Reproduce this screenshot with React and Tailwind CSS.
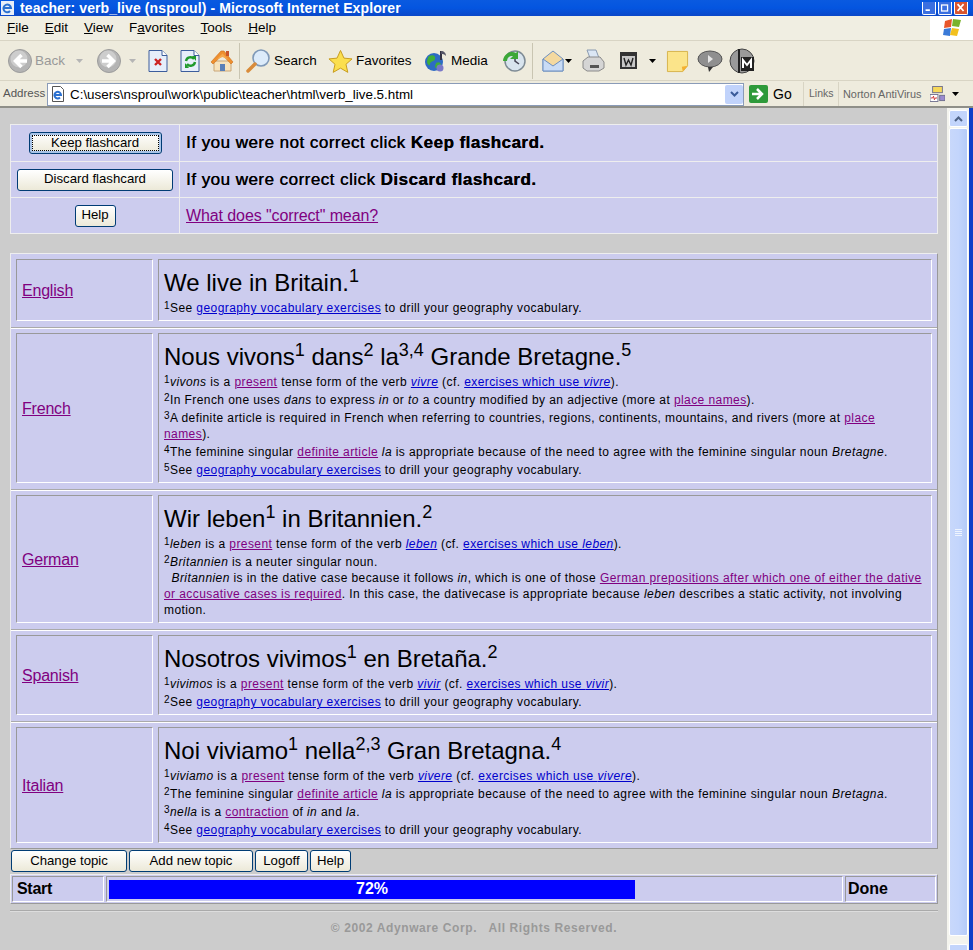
import React from "react";

const sans = "font-['Liberation_Sans',Arial,sans-serif]";

function Btn({ w, focused, children }) {
  return (
    <button
      type="button"
      className={`h-[22px] ${w} shrink-0 rounded-[3px] border border-[#003c74] bg-gradient-to-b from-white to-[#ece9d8] pb-[1px] text-[13.2px] leading-none text-black ${
        focused ? "shadow-[inset_0_0_0_2px_#a9c4e8] outline-1 -outline-offset-4 outline-dotted outline-black" : ""
      }`}
    >
      {children}
    </button>
  );
}

function A({ purple, children }) {
  return <a className={`underline ${purple ? "text-[#800080]" : "text-[#0000cc]"}`}>{children}</a>;
}

function N({ n, children }) {
  return (
    <p className="pt-[2px] leading-[16px]">
      <sup className="relative -top-[3px] align-baseline text-[10px] leading-none">{n}</sup>
      {children}
    </p>
  );
}

function Row({ lang, title, children, first }) {
  return (
    <div className={`-mx-[5px] flex gap-[5px] px-[5px] ${first ? "" : "mt-[6px] border-t border-[#aaa] pt-[5px] shadow-[inset_0_1px_0_#fff]"}`}>
      <div className="flex w-[137px] shrink-0 items-center border border-b-white border-l-[#999] border-r-white border-t-[#999] bg-[#ccccee] pl-[5px] pt-[1px] text-[16px] tracking-[-0.2px]">
        <A purple>{lang}</A>
      </div>
      <div className="min-w-0 flex-1 border border-b-white border-l-[#999] border-r-white border-t-[#999] bg-[#ccccee] pl-[5px] pr-[6px] pb-[4px] text-[12px] tracking-[0.42px]">
        <h2 className="h-[38px] pt-[5px] text-[24px] leading-[36px] tracking-[0px] whitespace-nowrap">{title}</h2>
        {children}
      </div>
    </div>
  );
}

const S = ({ children }) => (
  <sup className="relative -top-[9px] align-baseline text-[18px] leading-none">{children}</sup>
);

const Geo = ({ n }) => (
  <N n={n}>
    See <A>geography vocabulary exercises</A> to drill your geography vocabulary.
  </N>
);

function Present() {
  return <A purple>present</A>;
}

function TitleBar() {
  return (
    <div className="flex h-[16px] items-center bg-gradient-to-b from-[#0a5ae0] via-[#0455e0] to-[#0a47c8] text-white">
      <svg width="16" height="15" viewBox="0 0 16 15" className="shrink-0">
        <rect x="1" y="0" width="13" height="14" fill="#e8eef8" />
        <path d="M3.500 7h7.500a3.800 3.800 0 1 0-1 3" fill="none" stroke="#2a70d0" strokeWidth="2" />
      </svg>
      <span className="ml-[4px] text-[14px] font-bold leading-none tracking-[0.1px] whitespace-nowrap">
        teacher: verb_live (nsproul) - Microsoft Internet Explorer
      </span>
      <div className="ml-auto flex gap-[2px] pr-[5px]">
        <WinBtn>
          <rect x="3" y="8" width="5" height="2" fill="#fff" />
        </WinBtn>
        <WinBtn>
          <rect x="3" y="3" width="7" height="7" fill="none" stroke="#fff" strokeWidth="1.5" />
        </WinBtn>
        <WinBtn red>
          <path d="M3 2l7 8M10 2l-7 8" stroke="#fff" strokeWidth="2" />
        </WinBtn>
      </div>
    </div>
  );
}

function WinBtn({ red, children }) {
  return (
    <svg
      width="14"
      height="13"
      viewBox="0 0 14 13"
      className={`rounded-b-[2px] border-x border-b border-white ${red ? "bg-[#d8552f]" : "bg-[#3a6fe0]"}`}
    >
      {children}
    </svg>
  );
}

function MenuBar() {
  const items = [
    ["F", "ile"],
    ["E", "dit"],
    ["V", "iew"],
    ["F", "avorites", 1],
    ["T", "ools"],
    ["H", "elp"],
  ];
  return (
    <div className="flex h-[25px] items-center border-b border-[#d8d4c4] bg-[#f0eee2] pl-[7px] text-[13.5px] text-black">
      <div className="flex gap-[16px]">
        {items.map(([a, b, fav], i) => (
          <span key={i}>
            {fav ? (
              <>
                F<span className="underline">a</span>vorites
              </>
            ) : (
              <>
                <span className="underline">{a}</span>
                {b}
              </>
            )}
          </span>
        ))}
      </div>
      <div className="ml-auto flex h-full w-[43px] items-center justify-center bg-white">
        <svg width="22" height="20" viewBox="0 0 22 20">
          <path d="M4 3l7-2-1 8-7 1z" fill="#e8562a" />
          <path d="M12 1l8 1-2 7-7-1z" fill="#7ab32c" />
          <path d="M3 11l7-1-1 8-7-1z" fill="#3a7ad8" />
          <path d="M11 10l7 1-2 7-7-1z" fill="#f2c01e" />
        </svg>
      </div>
    </div>
  );
}

function Nav({ right }) {
  return (
    <svg width="24" height="24" viewBox="0 0 24 24" className="shrink-0">
      <circle cx="12" cy="12" r="11.500" fill="#b4b4b4" stroke="#9c9c9c" />
      <circle cx="11" cy="10" r="8.500" fill="#cdcdcd" />
      <path
        d={right ? "M5 12h11M10.500 6l6 6-6 6" : "M19 12H8M13.500 6l-6 6 6 6"}
        fill="none"
        stroke="#fff"
        strokeWidth="3.500"
      />
    </svg>
  );
}

const Caret = ({ c = "#b5b5b5" }) => (
  <svg width="7" height="4" viewBox="0 0 7 4" className="shrink-0">
    <path d="M0 0h7L3.500 4z" fill={c} />
  </svg>
);

const Sep = () => <div className="h-[36px] w-px shrink-0 bg-[#c9c5b2]" />;

function PageIcon({ children }) {
  return (
    <svg width="20" height="24" viewBox="0 0 20 24" className="shrink-0">
      <path d="M1 1.500h13l5 5v16H1z" fill="#e6eefa" stroke="#3c5d9c" />
      <path d="M14 1.500v5h5" fill="#fff" stroke="#3c5d9c" />
      {children}
    </svg>
  );
}

function ToolBar() {
  return (
    <div className="flex h-[40px] items-center border-b border-[#d8d4c4] bg-[#eeebdd] pl-[8px] pt-[1px] text-[13.500px] text-black">
      <Nav />
      <span className="ml-[3px] w-[30px] text-[#999]">Back</span>
      <span className="ml-[11px] flex"><Caret /></span>
      <span className="ml-[14px] flex"><Nav right /></span>
      <span className="ml-[8px] flex"><Caret /></span>
      <span className="ml-[12px] flex">
        <PageIcon>
          <path d="M7 10l6 6M13 10l-6 6" stroke="#cc2222" strokeWidth="2.400" />
        </PageIcon>
      </span>
      <span className="ml-[12px] flex">
        <PageIcon>
          <path d="M6 12a4.500 4.500 0 0 1 8-2" fill="none" stroke="#1f9a2c" strokeWidth="2.400" />
          <path d="M15 13a4.500 4.500 0 0 1-8 2" fill="none" stroke="#1f9a2c" strokeWidth="2.400" />
          <path d="M12 7h4v5zM9 19H5v-5z" fill="#1f9a2c" />
        </PageIcon>
      </span>
      <svg width="24" height="24" viewBox="0 0 24 24" className="ml-[10px] shrink-0">
        <path d="M4 12h17v10H4z" fill="#f7e3bd" stroke="#c9a678" />
        <path d="M1 13L11 2h3l9 11-2 2-8.500-9L3 15z" fill="#ef8f2e" stroke="#c96f1c" strokeWidth="0.600" />
        <path d="M6 11l6.500-6.500L19 11l-6.500-3z" fill="#f5a94e" />
        <rect x="16" y="2" width="3" height="5" fill="#c9552a" />
        <rect x="10" y="15" width="5" height="7" fill="#5a80b8" />
      </svg>
      <div className="ml-[5px] mr-[5px]"><Sep /></div>
      <svg width="26" height="26" viewBox="0 0 26 26" className="shrink-0">
        <circle cx="16" cy="10" r="8" fill="#dcebfa" stroke="#7f99b8" strokeWidth="1.600" />
        <path d="M10 16L3 23" stroke="#d98b3a" strokeWidth="3.500" strokeLinecap="round" />
      </svg>
      <span className="ml-[3px] w-[43px]">Search</span>
      <svg width="25" height="25" viewBox="0 0 26 25" className="ml-[11px] shrink-0">
        <path
          d="M13 1l3.600 8 8.400.8-6.300 5.600 1.900 8.400L13 19.400 5.400 23.800l1.900-8.400L1 9.800 9.400 9z"
          fill="#fbdf4e"
          stroke="#c79a1a"
        />
      </svg>
      <span className="ml-[3px] w-[55px]">Favorites</span>
      <svg width="24" height="24" viewBox="0 0 24 24" className="ml-[13px] shrink-0">
        <circle cx="10" cy="13" r="9" fill="#2d6bc4" />
        <path d="M5 7c4-2 7 0 6 3s-5 2-5 5-3 0-3-2 1-5 2-6zM12 14c3-2 5 0 5 2s-3 4-5 3 0-4 0-5z" fill="#3fae3a" />
        <path d="M17 2v9" stroke="#334" strokeWidth="2" />
        <path d="M17 2c3 0 5 2 5 5-2-2-3-2-5-2z" fill="#556" />
        <circle cx="16" cy="19" r="3.500" fill="#7a78c8" />
      </svg>
      <span className="ml-[3px] w-[38px]">Media</span>
      <svg width="24" height="24" viewBox="0 0 24 24" className="ml-[13px] shrink-0">
        <circle cx="13" cy="12" r="10" fill="#d8e4ee" stroke="#7d8a94" strokeWidth="1.500" />
        <path d="M13 6v6l4 3" fill="none" stroke="#445" strokeWidth="1.500" />
        <path d="M1 12a9 9 0 0 1 13-8l2-2v8h-8l3-3a5 5 0 0 0-6 5z" fill="#3ca838" />
      </svg>
      <div className="ml-[6px] mr-[8px]"><Sep /></div>
      <svg width="24" height="24" viewBox="0 0 24 24" className="shrink-0">
        <path d="M2 10L12 2l10 8v12H2z" fill="#f4d9a0" stroke="#6d8fc0" />
        <path d="M2 10l10 7 10-7v12H2z" fill="#c9dcf6" stroke="#6d8fc0" />
      </svg>
      <Caret c="#000" />
      <svg width="24" height="24" viewBox="0 0 24 24" className="ml-[9px] shrink-0">
        <path d="M6 1h9l3 8H9z" fill="#dbe6f4" stroke="#8a9ab0" />
        <path d="M2 12l5-4h12l4 5v6l-5 3H6l-4-3z" fill="#d5d5d5" stroke="#8a8a8a" />
        <rect x="9" y="16" width="9" height="3" fill="#555" />
      </svg>
      <svg width="18" height="18" viewBox="0 0 18 18" className="ml-[15px] shrink-0">
        <rect x="1" y="1" width="15" height="15" fill="#c7c7c7" stroke="#333" strokeWidth="2" />
        <rect x="1" y="1" width="15" height="3" fill="#333" />
        <path d="M4 6l2 7 2.500-5 2.500 5 2-7" fill="none" stroke="#222" strokeWidth="1.400" />
      </svg>
      <span className="ml-[11px] flex"><Caret c="#000" /></span>
      <svg width="23" height="23" viewBox="0 0 24 24" className="ml-[10px] shrink-0">
        <path d="M1.500 1.500h21v15l-5 6h-16z" fill="#fbe48a" stroke="#d6b24a" />
        <path d="M17.500 22.500l-1-5 6-1z" fill="#f4b030" />
      </svg>
      <svg width="26" height="22" viewBox="0 0 26 22" className="ml-[8px] shrink-0">
        <ellipse cx="13" cy="9" rx="12" ry="8" fill="#8f8f8f" stroke="#555" />
        <path d="M11 17l1 5 4-5z" fill="#333" />
        <path d="M11 5l5 4-5 4z" fill="#e6e6e6" />
      </svg>
      <svg width="26" height="26" viewBox="0 0 26 26" className="ml-[6px] shrink-0">
        <circle cx="13" cy="13" r="12" fill="#9a9a9a" stroke="#444" />
        <path d="M9 1h2v24H9z" fill="#222" />
        <rect x="12" y="9" width="13" height="14" fill="#222" />
        <path d="M14 20v-8l4 5 4-5v8" fill="none" stroke="#fff" strokeWidth="2" />
      </svg>
    </div>
  );
}

function AddressBar() {
  return (
    <div className="flex h-[27px] items-center border-b-2 border-[#8f8f88] bg-[#eeebdd] pt-[1px] text-black">
      <span className="ml-[3px] w-[44px] shrink-0 text-[11.500px] text-[#555]">Address</span>
      <div className="flex h-[23px] w-[697px] shrink-0 items-center border border-[#8a9bb8] bg-white pl-[2px]">
        <svg width="16" height="16" viewBox="0 0 16 16" className="shrink-0">
          <path d="M2.500.5h8l3 3v12h-11z" fill="#fff" stroke="#555" />
          <path d="M4.500 9h6.500a3.300 3.300 0 1 0-1 2.500" fill="none" stroke="#2a70d0" strokeWidth="2" />
        </svg>
        <span className="ml-[4px] pt-[2px] text-[13.400px] leading-none whitespace-nowrap">
          C:\users\nsproul\work\public\teacher\html\verb_live.5.html
        </span>
        <div className="ml-auto flex h-[19px] w-[18px] items-center justify-center rounded-[2px] bg-[#c1d3fb]">
          <svg width="9" height="6" viewBox="0 0 9 6">
            <path d="M1 1l3.500 3.500L8 1" fill="none" stroke="#3a5a99" strokeWidth="2" />
          </svg>
        </div>
      </div>
      <svg width="19" height="18" viewBox="0 0 19 18" className="ml-[5px] shrink-0">
        <rect width="19" height="18" rx="2" fill="#2e9a3a" />
        <path d="M3 9h9M8 4l5 5-5 5" fill="none" stroke="#fff" strokeWidth="2.500" />
      </svg>
      <span className="ml-[5px] w-[18px] text-[14px]">Go</span>
      <div className="ml-[12px] h-full w-px bg-[#d8d4c4]" />
      <span className="ml-[5px] w-[24px] text-[10.500px] text-[#666]">Links</span>
      <div className="ml-[5px] h-full w-px bg-[#d8d4c4]" />
      <span className="ml-[4px] w-[79px] text-[10.900px] text-[#666] whitespace-nowrap">Norton AntiVirus</span>
      <svg width="15" height="16" viewBox="0 0 17 17" className="ml-[8px] shrink-0">
        <rect x="3" y="0" width="11" height="7" fill="#f7d85a" stroke="#6a6a8a" />
        <rect x="0" y="9" width="9" height="8" fill="#fff" stroke="#6a6a8a" />
        <path d="M1 13h2l1-2 1 4 1-2h2" fill="none" stroke="#cc2222" />
        <rect x="11" y="10" width="6" height="6" fill="#9a8ad0" stroke="#6a6a8a" />
      </svg>
      <span className="ml-[7px] flex"><Caret c="#000" /></span>
    </div>
  );
}

function ScrollBar() {
  return (
    <div className="flex w-[26px] shrink-0 border-r-[4px] border-[#0f3fc8] bg-[#f4f4ee]">
      <div className="flex w-[22px] flex-col gap-[1px] pl-[2px] pr-[1px] pt-[2px]">
        <div className="flex h-[17px] shrink-0 items-center justify-center rounded-[2px] border border-white bg-[#c3d5fc]">
          <svg width="9" height="6" viewBox="0 0 9 6">
            <path d="M1 5l3.500-3.500L8 5" fill="none" stroke="#4d6185" strokeWidth="2" />
          </svg>
        </div>
        <div className="flex flex-1 items-center justify-center rounded-[2px] border border-white bg-gradient-to-r from-[#c8d8fb] via-[#c3d5fc] to-[#b5cbf8]">
          <div className="flex w-[7px] flex-col gap-[1px]">
            <div className="h-px bg-[#eef4fe]" />
            <div className="h-px bg-[#eef4fe]" />
            <div className="h-px bg-[#eef4fe]" />
            <div className="h-px bg-[#eef4fe]" />
          </div>
        </div>
        <div className="mt-[7px] h-[6px] shrink-0 rounded-t-[2px] border border-b-0 border-white bg-[#c3d5fc]" />
      </div>
    </div>
  );
}

function TopRow({ btn, children }) {
  return (
    <div className="flex h-[36px] border-t border-[#eee] first:border-t-0">
      <div className="flex w-[169px] shrink-0 items-center justify-center border-r border-[#eee]">{btn}</div>
      <div className="flex flex-1 items-center pl-[6px] text-[17px] tracking-[0.47px] [text-shadow:0.3px_0_0_#000]">{children}</div>
    </div>
  );
}

export default function App() {
  return (
    <div className={`flex h-[950px] w-[973px] flex-col overflow-hidden bg-[#ccc] ${sans}`}>
      <TitleBar />
      <MenuBar />
      <ToolBar />
      <AddressBar />
      <div className="flex min-h-0 flex-1">
        <div className="min-w-0 flex-1 pt-[16px] pl-[10px] pr-[9px] text-black">
          <div className="border border-[#eee] bg-[#ccccee]">
            <TopRow btn={<Btn w="w-[133px]" focused>Keep flashcard</Btn>}>
              <span>If you were not correct click <b>Keep flashcard.</b></span>
            </TopRow>
            <TopRow btn={<Btn w="w-[156px]">Discard flashcard</Btn>}>
              <span>If you were correct click <b>Discard flashcard.</b></span>
            </TopRow>
            <TopRow btn={<Btn w="w-[41px]">Help</Btn>}>
              <span className="text-[16px] tracking-[-0.1px] [text-shadow:none]"><A purple>What does "correct" mean?</A></span>
            </TopRow>
          </div>

          <div className="mt-[19px] border border-b-[#999] border-l-[#eee] border-r-[#999] border-t-[#eee] bg-[#ccccee] px-[5px] pt-[5px] pb-[5px]">
            <Row first lang="English" title={<>We live in Britain.<S>1</S></>}>
              <Geo n="1" />
            </Row>
            <Row lang="French" title={<>Nous vivons<S>1</S> dans<S>2</S> la<S>3,4</S> Grande Bretagne.<S>5</S></>}>
              <N n="1"><i>vivons</i> is a <Present /> tense form of the verb <A><i>vivre</i></A> (cf. <A>exercises which use <i>vivre</i></A>).</N>
              <N n="2">In French one uses <i>dans</i> to express <i>in</i> or <i>to</i> a country modified by an adjective (more at <A purple>place names</A>).</N>
              <N n="3">A definite article is required in French when referring to countries, regions, continents, mountains, and rivers (more at <A purple>place names</A>).</N>
              <N n="4">The feminine singular <A purple>definite article</A> <i>la</i> is appropriate because of the need to agree with the feminine singular noun <i>Bretagne</i>.</N>
              <Geo n="5" />
            </Row>
            <Row lang="German" title={<>Wir leben<S>1</S> in Britannien.<S>2</S></>}>
              <N n="1"><i>leben</i> is a <Present /> tense form of the verb <A><i>leben</i></A> (cf. <A>exercises which use <i>leben</i></A>).</N>
              <N n="2"><i>Britannien</i> is a neuter singular noun.</N>
              <p className="leading-[16px]">
                &nbsp;&nbsp;<i>Britannien</i> is in the dative case because it follows <i>in</i>, which is one of those <A purple>German prepositions after which one of either the dative or accusative cases is required</A>. In this case, the dativecase is appropriate because <i>leben</i> describes a static activity, not involving motion.
              </p>
            </Row>
            <Row lang="Spanish" title={<>Nosotros vivimos<S>1</S> en Bretaña.<S>2</S></>}>
              <N n="1"><i>vivimos</i> is a <Present /> tense form of the verb <A><i>vivir</i></A> (cf. <A>exercises which use <i>vivir</i></A>).</N>
              <Geo n="2" />
            </Row>
            <Row lang="Italian" title={<>Noi viviamo<S>1</S> nella<S>2,3</S> Gran Bretagna.<S>4</S></>}>
              <N n="1"><i>viviamo</i> is a <Present /> tense form of the verb <A><i>vivere</i></A> (cf. <A>exercises which use <i>vivere</i></A>).</N>
              <N n="2">The feminine singular <A purple>definite article</A> <i>la</i> is appropriate because of the need to agree with the feminine singular noun <i>Bretagna</i>.</N>
              <N n="3"><i>nella</i> is a <A purple>contraction</A> of <i>in</i> and <i>la</i>.</N>
              <Geo n="4" />
            </Row>
          </div>

          <div className="mt-[1px] flex gap-[2px] pl-px">
            <Btn w="w-[116px]">Change topic</Btn>
            <Btn w="w-[124px]">Add new topic</Btn>
            <Btn w="w-[53px]">Logoff</Btn>
            <Btn w="w-[41px]">Help</Btn>
          </div>

          <div className="mt-[2px] flex h-[30px] gap-[2px] border border-b-[#999] border-l-[#eee] border-r-[#999] border-t-[#eee] bg-[#ccccee] p-px text-[16px] font-bold">
            <div className="flex w-[92px] items-center border border-b-white border-l-[#999] border-r-white border-t-[#999] bg-[#ccccee] pl-[4px] tracking-[-0.3px]">Start</div>
            <div className="flex flex-1 items-center border border-b-white border-l-[#999] border-r-white border-t-[#999] bg-[#ccccee] pl-[2px]">
              <div className="flex h-[19px] w-[526px] items-center justify-center bg-[#0000ff] text-white">72%</div>
            </div>
            <div className="flex w-[91px] items-center border border-b-white border-l-[#999] border-r-white border-t-[#999] bg-[#ccccee] pl-[2px]">Done</div>
          </div>

          <div className="mt-[6px] h-[2px] border-t border-[#aaa] bg-[#ddd]" />
          <p className="mt-[7px] text-center text-[12px] font-bold tracking-[0.6px] text-[#999]">
            © 2002 Adynware Corp. &nbsp; All Rights Reserved.
          </p>
        </div>
        <ScrollBar />
      </div>
    </div>
  );
}
